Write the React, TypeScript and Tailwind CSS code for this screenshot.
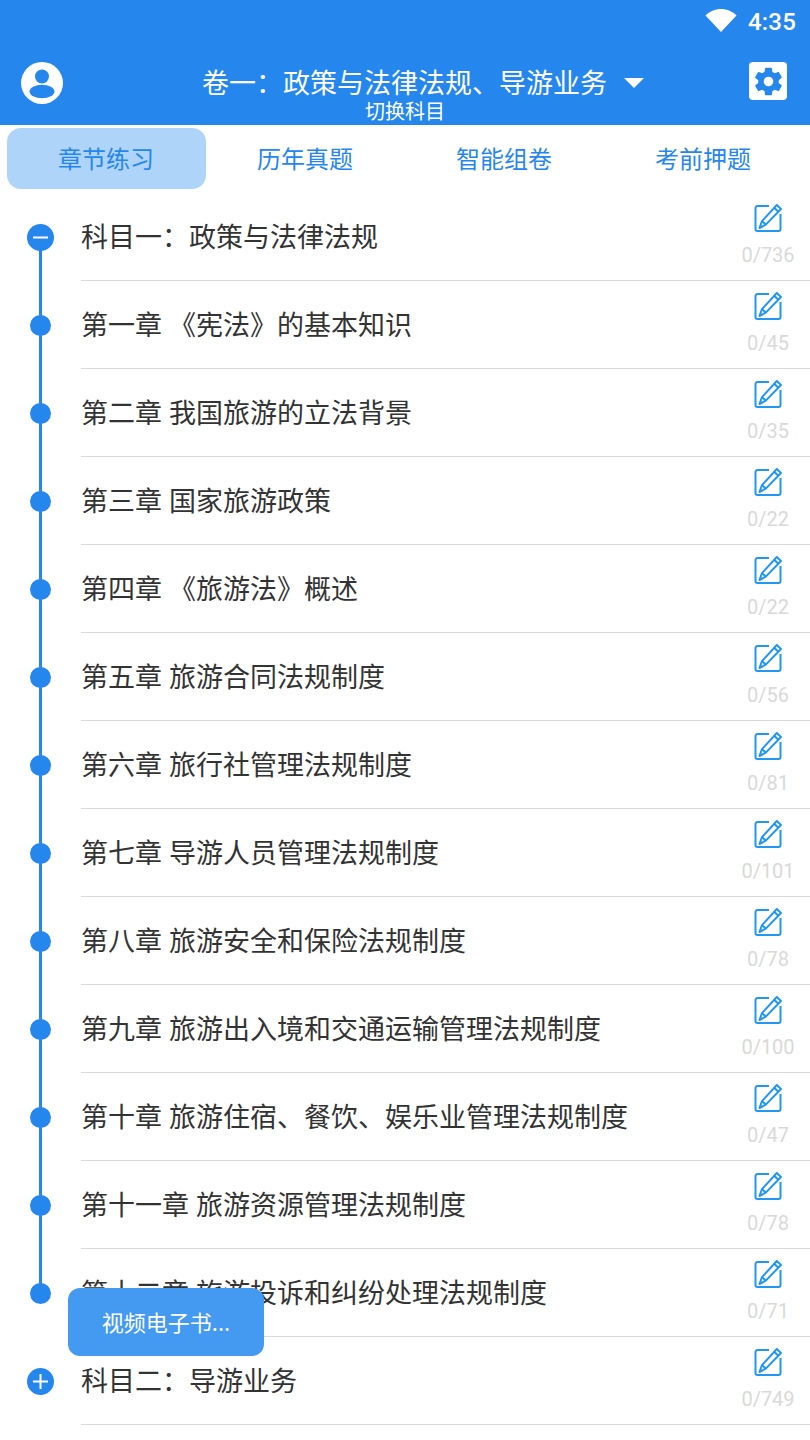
import React from "react";

const chapters = [
  { title: "科目一：政策与法律法规", count: "0/736", kind: "open" },
  { title: "第一章 《宪法》的基本知识", count: "0/45" },
  { title: "第二章 我国旅游的立法背景", count: "0/35" },
  { title: "第三章 国家旅游政策", count: "0/22" },
  { title: "第四章 《旅游法》概述", count: "0/22" },
  { title: "第五章 旅游合同法规制度", count: "0/56" },
  { title: "第六章 旅行社管理法规制度", count: "0/81" },
  { title: "第七章 导游人员管理法规制度", count: "0/101" },
  { title: "第八章 旅游安全和保险法规制度", count: "0/78" },
  { title: "第九章 旅游出入境和交通运输管理法规制度", count: "0/100" },
  { title: "第十章 旅游住宿、餐饮、娱乐业管理法规制度", count: "0/47" },
  { title: "第十一章 旅游资源管理法规制度", count: "0/78" },
  { title: "第十二章 旅游投诉和纠纷处理法规制度", count: "0/71", kind: "last" },
  { title: "科目二：导游业务", count: "0/749", kind: "closed" },
];

const tabs = ["章节练习", "历年真题", "智能组卷", "考前押题"];

function EditIcon() {
  return (
    <svg width="30" height="30" viewBox="0 0 30 30" fill="none" stroke="#2196f3" strokeWidth="2" strokeLinejoin="round">
      <path d="M16 3H4.500a2 2 0 0 0-2 2v21a2 2 0 0 0 2 2h21a2 2 0 0 0 2-2V11" />
      <path d="M23.800 2l4.200 4L12.800 21.600l-6.300 3.400 2.500-6.800z" />
      <path d="M21.200 4.700l4.200 4M9 18.200l3.800 3.400" />
    </svg>
  );
}

function Avatar() {
  return (
    <svg width="42" height="42" viewBox="0 0 42 42">
      <circle cx="21" cy="21" r="21" fill="#fff" />
      <circle cx="21" cy="14.500" r="7" fill="#2587ee" />
      <ellipse cx="21" cy="29.500" rx="12.500" ry="6.800" fill="#2587ee" />
    </svg>
  );
}

function Gear() {
  return (
    <div className="flex h-[38px] w-[38px] items-center justify-center rounded-[4px] bg-white">
      <svg width="33" height="33" viewBox="0 0 24 24" fill="#2587ee">
        <path d="M19.400 13c.04-.32.07-.66.07-1s-.03-.68-.07-1l2.100-1.650c.2-.15.25-.42.12-.64l-2-3.460a.5.5 0 0 0-.6-.22l-2.500 1a7.300 7.300 0 0 0-1.700-1l-.37-2.650A.5.5 0 0 0 14 2h-4a.5.5 0 0 0-.5.42L9.130 5.070c-.6.25-1.170.59-1.690 1l-2.490-1a.5.5 0 0 0-.61.22l-2 3.460c-.13.22-.07.49.12.64L4.570 11c-.04.32-.07.67-.07 1s.03.68.07 1l-2.110 1.650c-.19.15-.25.42-.12.64l2 3.460c.12.22.39.3.61.22l2.490-1c.52.4 1.080.74 1.690 1l.37 2.650c.05.24.26.42.5.42h4c.25 0 .46-.18.5-.42l.37-2.650c.6-.26 1.170-.6 1.690-1l2.490 1c.23.08.49 0 .61-.22l2-3.460c.12-.22.07-.49-.12-.64zM12 15.500a3.500 3.500 0 1 1 0-7 3.500 3.500 0 0 1 0 7z" />
      </svg>
    </div>
  );
}

function Marker({ kind }: { kind?: string }) {
  if (kind === "open" || kind === "closed") {
    return (
      <div className="relative z-10 flex h-[27px] w-[27px] items-center justify-center rounded-full bg-[#2587ee]">
        <svg width="17" height="17" viewBox="0 0 17 17" stroke="#fff" strokeWidth="2">
          <path d="M1 8.500h15" />
          {kind === "closed" && <path d="M8.500 1v15" />}
        </svg>
      </div>
    );
  }
  return <div className="relative z-10 h-[21px] w-[21px] rounded-full bg-[#2587ee]" />;
}

export default function App() {
  return (
    <div className="relative h-[1440px] w-[810px] overflow-hidden bg-white font-['Noto_Sans_CJK_SC','Noto_Sans',sans-serif]">
      {/* status bar + title */}
      <header className="h-[125px] bg-[#2587ee] text-white">
        <div className="flex h-[44px] items-center justify-end pr-[14px]">
          <svg width="32" height="24" viewBox="0 0 32 24" className="mb-[4px] mr-[11px]">
            <path d="M0.500 7.500C4.500 3.500 10 1 16 1s11.500 2.500 15.500 6.500L16 24z" fill="#fff" />
          </svg>
          <span className="font-['Roboto',sans-serif] text-[24px] font-medium leading-none tracking-[0.2px]">4:35</span>
        </div>
        <div className="flex h-[81px] items-start pl-[21px] pr-[23px] pt-[18px]">
          <Avatar />
          <div className="flex flex-1 flex-col items-center pl-[34px]">
            <div className="mt-[-2px] flex h-[42px] items-center">
              <span className="text-[27px] leading-none">卷一：政策与法律法规、导游业务</span>
              <span className="ml-[17px] mt-[3px] h-0 w-0 border-x-[10.500px] border-t-[10px] border-x-transparent border-t-white" />
            </div>
            <span className="mr-[36px] mt-[-2px] text-[20px] leading-[22px]">切换科目</span>
          </div>
          <div>
            <Gear />
          </div>
        </div>
      </header>

      {/* tabs */}
      <nav className="grid h-[68px] grid-cols-4 px-[7px] pt-[3px]">
        {tabs.map((tab, i) => (
          <div
            key={tab}
            className={`flex h-[61px] items-center justify-center rounded-[14px] text-[24px] leading-none text-[#2587ee] ${i === 0 ? "bg-[#afd4f9]" : ""}`}
          >
            <span className="mr-[1px] mb-[1px]">{tab}</span>
          </div>
        ))}
      </nav>

      {/* chapter list with timeline */}
      <div className="relative">
        <div className="absolute left-[39px] top-[44px] h-[1056px] w-[3px] bg-[#2587ee]" />
        {chapters.map((c) => (
          <div key={c.title} className="flex h-[88px]">
            <div className="flex w-[81px] shrink-0 items-center justify-center pr-[1px] pt-[1px]">
              <Marker kind={c.kind} />
            </div>
            <div className="flex flex-1 items-center border-b border-[#d9d9d9]">
              <span className="mb-[2px] flex-1 text-[27px] leading-none text-[#333333] [word-spacing:1px]">{c.title}</span>
              <div className="flex w-[84px] flex-col items-center self-start pt-[10px]">
                <EditIcon />
                <span className="mt-[10px] font-['Roboto',sans-serif] text-[20px] leading-[24px] text-[#d9d9d9]">{c.count}</span>
              </div>
            </div>
          </div>
        ))}
      </div>

      {/* floating shortcut */}
      <div className="absolute left-[68px] top-[1288px] flex h-[68px] w-[196px] items-center justify-center rounded-[12px] bg-[#4499f1] pb-[2px] text-[22px] leading-none text-white">
        视频电子书...
      </div>
    </div>
  );
}
